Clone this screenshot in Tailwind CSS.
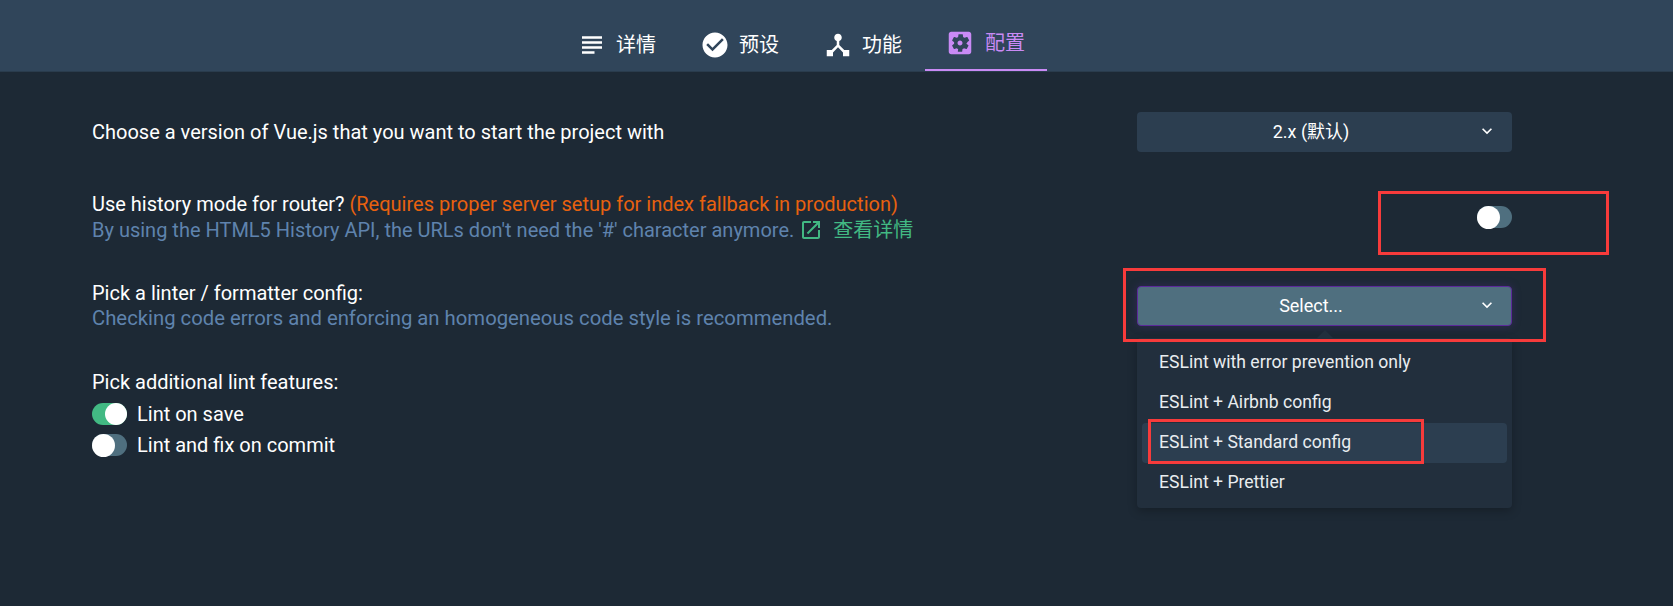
<!DOCTYPE html>
<html lang="zh">
<head>
    <meta charset="UTF-8">
    <meta name="viewport" content="width=device-width, initial-scale=1.0">
    <script src="https://cdn.jsdelivr.net/npm/@tailwindcss/browser@4"></script>
</head>
<body class="relative h-screen overflow-hidden bg-[#1d2935] text-white text-[20px] leading-[24.5px] font-['Roboto','Noto_Sans_CJK_SC',sans-serif]">

    <!-- top tabs -->
    <nav class="flex h-[72px] items-end pl-[557px] bg-[#30455a] border-b border-[#2a3c4d]">
        <a class="flex h-[72px] w-[122px] items-center gap-[9px] pl-5 pt-5">
            <svg class="size-[30px] fill-white" viewBox="0 0 24 24"><path d="M14 17H4v2h10v-2zm6-8H4v2h16V9zM4 15h16v-2H4v2zM4 5v2h16V5H4z"/></svg>
            <span>详情</span>
        </a>
        <a class="flex h-[72px] w-[122px] items-center gap-[9px] pl-[21px] pt-5">
            <svg class="size-[30px] fill-white" viewBox="0 0 24 24"><path d="M12 2C6.48 2 2 6.48 2 12s4.48 10 10 10 10-4.48 10-10S17.52 2 12 2zm-2 15l-5-5 1.41-1.41L10 14.17l7.59-7.59L19 8l-9 9z"/></svg>
            <span>预设</span>
        </a>
        <a class="flex h-[72px] w-[124px] items-center gap-[9px] pl-[22px] pt-5">
            <svg class="size-[30px] fill-white" viewBox="0 0 24 24"><path d="M17 16l-4-4V8.82C14.16 8.4 15 7.31 15 6c0-1.66-1.34-3-3-3S9 4.34 9 6c0 1.31.84 2.4 2 2.82V12l-4 4H3v5h5v-3.05l4-4.2 4 4.2V21h5v-5h-4z"/></svg>
            <span>功能</span>
        </a>
        <a class="flex h-[72px] w-[122px] items-center gap-2.5 pl-5 pt-[18px] border-b-2 border-[#c98af5] text-[#c98af5]">
            <svg class="size-[30px] fill-[#c98af5]" viewBox="0 0 24 24"><path d="M12 10c-1.1 0-2 .9-2 2s.9 2 2 2 2-.9 2-2-.9-2-2-2zm7-7H5c-1.11 0-2 .9-2 2v14c0 1.1.89 2 2 2h14c1.11 0 2-.9 2-2V5c0-1.1-.89-2-2-2zm-1.75 9c0 .23-.02.46-.05.68l1.48 1.16c.13.11.17.3.08.45l-1.4 2.42c-.09.15-.27.21-.43.15l-1.74-.7c-.36.28-.76.51-1.18.69l-.26 1.85c-.03.17-.18.3-.35.3h-2.8c-.17 0-.32-.13-.35-.3L10.5 16.85c-.43-.18-.82-.41-1.18-.69l-1.74.7c-.16.06-.34 0-.43-.15l-1.4-2.42c-.09-.15-.05-.34.08-.45l1.48-1.16c-.03-.23-.05-.46-.05-.68 0-.23.02-.46.05-.68l-1.48-1.16c-.13-.11-.17-.3-.08-.45l1.4-2.42c.09-.15.27-.21.43-.15l1.74.7c.36-.28.76-.51 1.18-.69l.26-1.85c.03-.17.18-.3.35-.3h2.8c.17 0 .32.13.35.3l.26 1.85c.43.18.82.41 1.18.69l1.74-.7c.16-.06.34 0 .43.15l1.4 2.42c.09.15.05.34-.08.45l-1.48 1.16c.03.23.05.46.05.68z"/></svg>
            <span>配置</span>
        </a>
    </nav>

    <main class="flex flex-col gap-10 pt-10 pl-[92px] pr-[161px]">
        <!-- vue version -->
        <section class="flex items-center justify-between">
            <div>Choose a version of Vue.js that you want to start the project with</div>
            <button class="relative flex h-10 w-[375px] items-center justify-center rounded-[4px] bg-[#2c3e50] pr-[27px] text-[18px]">
                2.x (默认)
                <svg class="absolute left-[340px] -mt-[2px] size-[20px] fill-white" viewBox="0 0 24 24"><path d="M16.59 8.59 12 13.17 7.41 8.59 6 10l6 6 6-6z"/></svg>
            </button>
        </section>

        <!-- history mode -->
        <section class="flex items-center justify-between">
            <div>
                <div>Use history mode for router? <span class="text-[#e8610f]">(Requires proper server setup for index fallback in production)</span></div>
                <div class="flex translate-y-px items-center text-[#5f83ad]">
                    By using the HTML5 History API, the URLs don't need the '#' character anymore.
                    <a class="ml-[5px] flex items-center gap-2.5 text-[#42b983]">
                        <svg class="size-6 fill-[#42b983]" viewBox="0 0 24 24"><path d="M19 19H5V5h7V3H5c-1.11 0-2 .9-2 2v14c0 1.1.89 2 2 2h14c1.1 0 2-.9 2-2v-7h-2v7zM14 3v2h3.59l-9.83 9.83 1.41 1.41L19 6.41V10h2V3h-7z"/></svg>
                        <span>查看详情</span>
                    </a>
                </div>
            </div>
            <div class="relative h-[22px] w-[35px] rounded-full bg-[#4f6f7f]">
                <div class="size-[23px] rounded-full bg-white"></div>
            </div>
        </section>

        <!-- linter config -->
        <section class="flex items-center justify-between">
            <div>
                <div>Pick a linter / formatter config:</div>
                <div class="text-[20.3px] text-[#5f83ad]">Checking code errors and enforcing an homogeneous code style is recommended.</div>
            </div>
            <div class="relative w-[375px] text-[18px]">
                <button class="relative flex h-10 w-full items-center justify-center rounded-[4px] border border-[#5b2a9a] bg-[#4f6f7f] pr-[27px] pt-[2px] shadow-[0_0_8px_rgba(91,42,154,0.35)]">
                    Select...
                    <svg class="absolute left-[339px] top-[8px] size-[20px] fill-white" viewBox="0 0 24 24"><path d="M16.59 8.59 12 13.17 7.41 8.59 6 10l6 6 6-6z"/></svg>
                </button>
                <!-- open dropdown -->
                <div class="absolute left-0 top-[52px] z-10 w-[375px] rounded-[4px] bg-[#222f3d] p-[5px] text-[17.6px] text-[#e9edf0] shadow-[0_3px_10px_rgba(0,0,0,0.25)]">
                    <div class="absolute -top-2 left-[180px] size-0 border-x-8 border-b-8 border-x-transparent border-b-[#222f3d]"></div>
                    <div class="flex h-10 items-center px-[17px]">ESLint with error prevention only</div>
                    <div class="flex h-10 items-center px-[17px]">ESLint + Airbnb config</div>
                    <div class="flex h-10 items-center rounded-[4px] bg-[#2c3e50] px-[17px]">ESLint + Standard config</div>
                    <div class="flex h-10 items-center px-[17px]">ESLint + Prettier</div>
                </div>
            </div>
        </section>

        <!-- lint features -->
        <section>
            <div>Pick additional lint features:</div>
            <div class="mt-1 flex h-[31px] items-center gap-2.5">
                <div class="flex h-[22px] w-[35px] justify-end rounded-full bg-[#42b983]">
                    <div class="size-[22px] rounded-full bg-white"></div>
                </div>
                Lint on save
            </div>
            <div class="flex h-[31px] items-center gap-2.5">
                <div class="h-[22px] w-[35px] rounded-full bg-[#4f6f7f]">
                    <div class="size-[23px] rounded-full bg-white"></div>
                </div>
                Lint and fix on commit
            </div>
        </section>
    </main>

    <!-- red annotation boxes drawn over the screenshot -->
    <div class="absolute left-[1378px] top-[191px] z-20 h-[64px] w-[231px] border-[3px] border-[#f73b3b]"></div>
    <div class="absolute left-[1123px] top-[268px] z-20 h-[74px] w-[423px] border-[3px] border-[#f73b3b]"></div>
    <div class="absolute left-[1148px] top-[419px] z-20 h-[45px] w-[276px] border-[3px] border-[#f73b3b]"></div>

</body>
</html>
